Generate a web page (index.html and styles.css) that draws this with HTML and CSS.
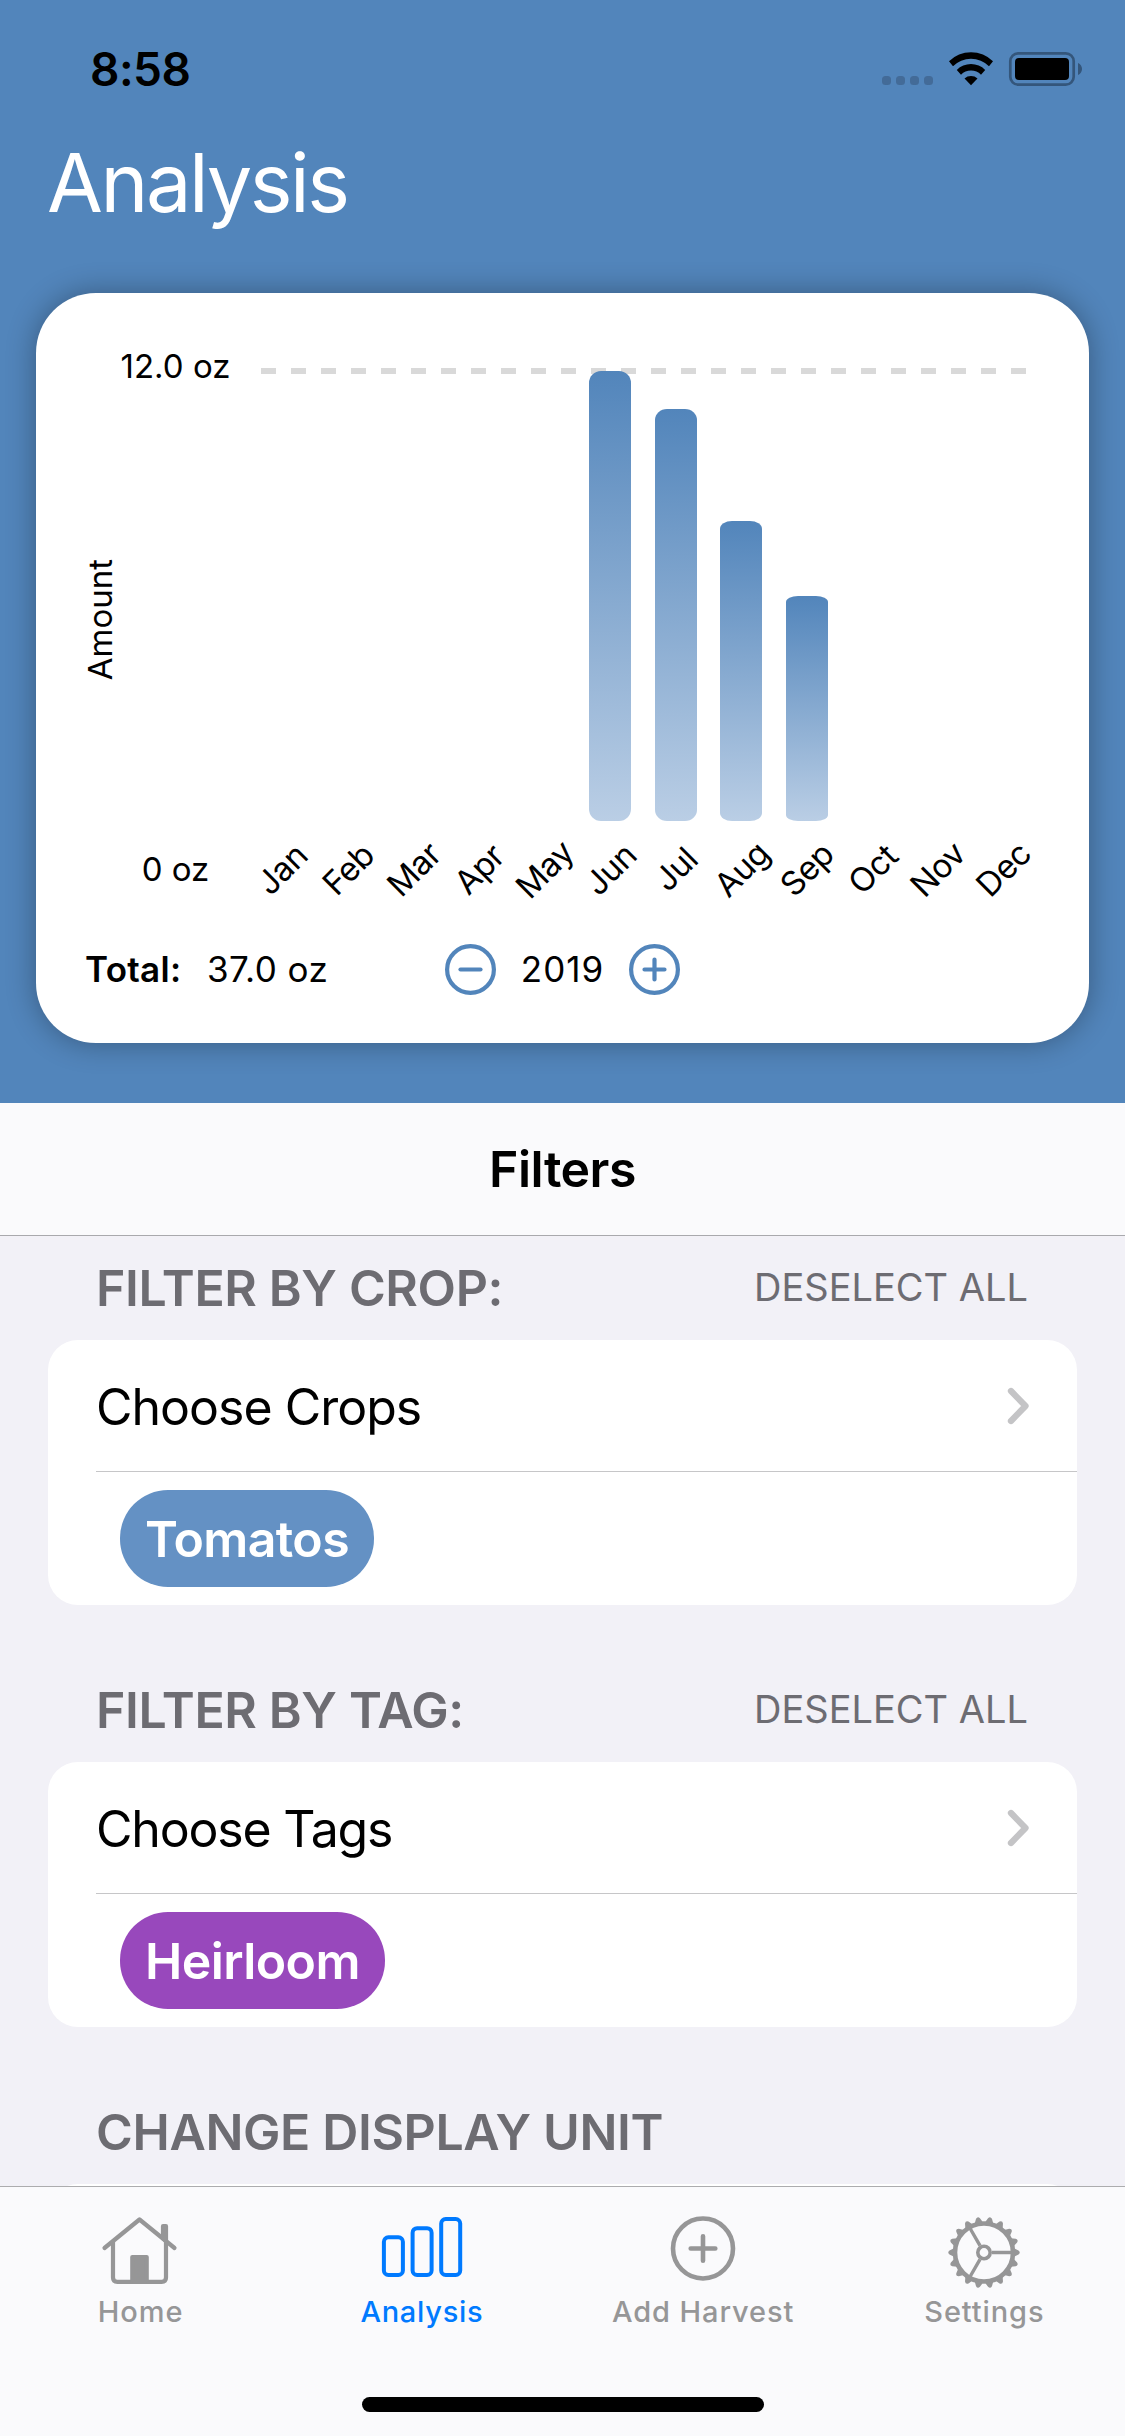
FILE: index.html
```html
<!DOCTYPE html>
<html lang="en">
<head>
<meta charset="utf-8">
<title>Analysis</title>
<link rel="stylesheet" href="styles.css">
</head>
<body>
<header class="hero">
  <div class="status">
    <span class="time">8:58</span>
    <svg class="status-icons" width="201" height="36" viewBox="0 0 201 36">
      <g fill="#436b98"><rect x="0" y="25" width="9" height="9" rx="3.5"/><rect x="14" y="25" width="9" height="9" rx="3.5"/><rect x="28" y="25" width="9" height="9" rx="3.5"/><rect x="42" y="25" width="9" height="9" rx="3.5"/></g>
      <g transform="translate(66.5 1)"><path d="M.5 9.3A31 31 0 0 1 44.5 9.3L40.5 14.3A25.5 25.5 0 0 0 4.5 14.3Z"/><path d="M8.3 18A20 20 0 0 1 36.7 18L32.5 22.7A14 14 0 0 0 12.5 22.7Z"/><path d="M16 26.4A10 10 0 0 1 29 26.4L22.5 33.2Z"/></g>
      <rect x="128.3" y="2.3" width="63.4" height="31.4" rx="8" fill="none" stroke="#34567b" stroke-width="2.7"/>
      <rect x="133" y="7" width="54" height="22" rx="4"/>
      <path d="M196 12C198.6 13 200 15.5 200 18S198.6 23 196 24Z" fill="#34567b"/>
    </svg>
  </div>
  <h1 class="title">Analysis</h1>
  <section class="card">
    <div class="chart">
      <div class="y-name"><span>Amount</span></div>
      <div class="y-axis"><span>12.0 oz</span><span>0 oz</span></div>
      <div class="plot">
        <div class="bars">
          <i></i><i></i><i></i><i></i><i></i>
          <i class="bar" style="height:450px;border-radius:12px/12px"></i>
          <i class="bar" style="height:412.5px;border-radius:12px/11px"></i>
          <i class="bar" style="height:300px;border-radius:12px/8px"></i>
          <i class="bar" style="height:225px;border-radius:12px/6px"></i>
        </div>
        <div class="months"><span>Jan</span><span>Feb</span><span>Mar</span><span>Apr</span><span>May</span><span>Jun</span><span>Jul</span><span>Aug</span><span>Sep</span><span>Oct</span><span>Nov</span><span>Dec</span></div>
      </div>
    </div>
    <div class="summary">
      <div class="total"><b>Total:</b><span>37.0 oz</span></div>
      <div class="stepper">
        <svg width="51" height="51" viewBox="0 0 51 51"><circle cx="25.5" cy="25.5" r="23.4"/><path d="M15.5 25.5H35.5"/></svg>
        <span class="year">2019</span>
        <svg width="51" height="51" viewBox="0 0 51 51"><circle cx="25.5" cy="25.5" r="23.4"/><path d="M15.5 25.5H35.5M25.5 15.5V35.5"/></svg>
      </div>
    </div>
  </section>
</header>
<div class="navbar">Filters</div>
<main class="list">
  <section class="group">
    <div class="group-head"><h2>FILTER BY CROP:</h2><span class="action">DESELECT ALL</span></div>
    <div class="cells">
      <div class="choose"><span>Choose Crops</span><svg width="23" height="38" viewBox="0 0 23 38"><path d="M4 4L18.5 19L4 34"/></svg></div>
      <div class="tags"><span class="pill crop">Tomatos</span></div>
    </div>
  </section>
  <section class="group">
    <div class="group-head"><h2>FILTER BY TAG:</h2><span class="action">DESELECT ALL</span></div>
    <div class="cells">
      <div class="choose choose-tags"><span>Choose Tags</span><svg width="23" height="38" viewBox="0 0 23 38"><path d="M4 4L18.5 19L4 34"/></svg></div>
      <div class="tags"><span class="pill tag">Heirloom</span></div>
    </div>
  </section>
  <section class="group">
    <div class="group-head"><h2>CHANGE DISPLAY UNIT</h2></div>
    <div class="cells"></div>
  </section>
</main>
<footer class="tabbar">
  <nav class="tabs">
    <a class="tab">
      <svg width="82" height="76" viewBox="0 0 82 76"><g transform="translate(2 3)" fill="none" stroke="currentColor" stroke-width="4.2" stroke-linecap="round" stroke-linejoin="round"><path d="M2.5 31L37.5 2.5L72.5 31"/><path d="M11 25V60.5Q11 64.8 15.3 64.8H59.7Q64 64.8 64 60.5V25"/><path d="M30.3 64V40H44.7V64Z" fill="currentColor"/><path d="M61 9.2H64V24L61 21.5Z" fill="currentColor"/></g></svg>
      <span>Home</span>
    </a>
    <a class="tab active">
      <svg width="82" height="76" viewBox="0 0 82 76"><g transform="translate(.9 3)" fill="none" stroke="currentColor" stroke-width="4"><rect x="2" y="20.3" width="19" height="37.7" rx="4.5"/><rect x="30.7" y="11.2" width="19" height="46.8" rx="4.5"/><rect x="59.3" y="2" width="19" height="56" rx="4.5"/></g></svg>
      <span>Analysis</span>
    </a>
    <a class="tab">
      <svg width="82" height="76" viewBox="0 0 82 76"><g fill="none" stroke="currentColor" stroke-width="4.6" stroke-linecap="round"><circle cx="41" cy="34.5" r="30"/><path d="M28.7 34.5H53.3M41 22.2V46.8"/></g></svg>
      <span>Add Harvest</span>
    </a>
    <a class="tab">
      <svg width="82" height="76" viewBox="0 0 82 76"><g transform="translate(41 38.5)" fill="none" stroke="currentColor"><circle r="29" stroke-width="4.6"/><circle r="6.2" stroke-width="3.6"/><path d="M8 0H28M-4 -6.93L-14 -24.25M-4 6.93L-14 24.25" stroke-width="3.4"/>
        <g fill="currentColor" stroke="none"><path id="teeth" d="M30-4.2L34.5-2Q37 0 34.5 2L30 4.2ZM-30-4.2L-34.5-2Q-37 0-34.5 2L-30 4.2Z"/><use href="#teeth" transform="rotate(20)"/><use href="#teeth" transform="rotate(40)"/><use href="#teeth" transform="rotate(60)"/><use href="#teeth" transform="rotate(80)"/><use href="#teeth" transform="rotate(100)"/><use href="#teeth" transform="rotate(120)"/><use href="#teeth" transform="rotate(140)"/><use href="#teeth" transform="rotate(160)"/></g></g></svg>
      <span>Settings</span>
    </a>
  </nav>
  <div class="home-indicator"></div>
</footer>
</body>
</html>
```
FILE: styles.css
```css
* { box-sizing: border-box; }
body {
  margin: 0; width: 1125px; height: 2436px; overflow: hidden;
  display: flex; flex-direction: column;
  font-family: Inter, "Liberation Sans", sans-serif; color: #000; background: #f2f1f7;
}
svg { display: block; flex: none; }
h1, h2 { margin: 0; }

.hero { height: 1103px; flex: none; background: #5285bb; }
.status { height: 138px; padding: 0 42px 0 90px; display: flex; align-items: center; justify-content: space-between; }
.time { font-size: 46px; font-weight: 600; letter-spacing: -.5px; }
.title { height: 89px; padding-left: 47px; font-size: 81px; line-height: 90px; font-weight: 400; letter-spacing: -2.4px; color: #fff; }
.card { height: 750px; margin: 66px 36px 0; padding-top: 48px; background: #fff; border-radius: 60px; box-shadow: 0 0 30px rgba(0, 0, 0, .33); }

.chart { display: grid; grid-template-columns: 31px 117px 793px; padding-left: 50px; height: 576px; font-size: 33px; }
.y-name { height: 557px; padding-right: 4px; display: flex; align-items: center; justify-content: center; }
.y-name span { writing-mode: vertical-rl; transform: rotate(180deg); }
.y-axis { height: 554px; display: flex; flex-direction: column; align-items: center; justify-content: space-between; line-height: 51px; }
.plot { margin-left: 27px; width: 766px; padding-top: 27px; }
.bars {
  height: 453px; padding-right: 1.8px; display: grid; grid-template-columns: repeat(12, 42px); justify-content: space-between; align-items: end;
  background: repeating-linear-gradient(90deg, #d9d9d9 0 15px, transparent 15px 30px) 0 0 / 100% 6px no-repeat;
}
.bar { background: linear-gradient(#5285bb, #bacee5); }
.months { height: 95px; padding-right: 2.6px; display: grid; grid-template-columns: repeat(12, 42px); justify-content: space-between; align-items: center; justify-items: center; letter-spacing: -.5px; }
.months span { transform: rotate(-45deg); }

.summary { display: grid; grid-template-columns: 1fr auto 1fr; align-items: center; height: 104px; font-size: 35px; }
.total { padding-left: 49px; display: flex; gap: 25.5px; letter-spacing: .5px; }
.total b { font-weight: 600; letter-spacing: .3px; }
.stepper { width: 235px; display: flex; align-items: center; justify-content: space-between; }
.stepper svg { fill: none; stroke: #5285bb; stroke-width: 4.2; stroke-linecap: round; }
.year { letter-spacing: 1px; }

.navbar { height: 133px; flex: none; display: flex; align-items: center; justify-content: center; background: #fafafc; border-bottom: 1px solid #a9a9ad; font-size: 50px; font-weight: 600; letter-spacing: -.5px; }

.list { height: 950px; flex: none; overflow: hidden; padding: 0 48px; }
.group { margin-bottom: 53px; }
.group-head { height: 104px; padding: 0 49px 0 48px; display: flex; align-items: center; justify-content: space-between; color: #6d6c72; }
.group-head h2 { font-size: 50px; font-weight: 600; letter-spacing: -.37px; }
.action { font-size: 38px; padding-bottom: 2px; }
.cells { height: 265px; background: #fff; border-radius: 30px; padding-left: 48px; }
.choose { height: 132px; padding-right: 47px; display: flex; align-items: center; justify-content: space-between; border-bottom: 1px solid #c6c6c8; font-size: 50px; letter-spacing: -1px; }
.choose-tags { letter-spacing: -1.2px; }
.choose span { padding-top: 2px; }
.choose svg { fill: none; stroke: #c4c4c6; stroke-width: 6.3; stroke-linecap: round; stroke-linejoin: round; }
.tags { height: 133px; display: flex; align-items: center; padding-left: 24px; }
.pill { height: 97px; display: flex; align-items: center; justify-content: center; border-radius: 48px; color: #fff; font-size: 50px; font-weight: 600; letter-spacing: -.6px; }
.crop { width: 254px; background: #6491c4; }
.tag { width: 265px; background: #9848bc; }

.tabbar { height: 250px; flex: none; border-top: 1px solid #acacae; background: #fafafc; }
.tabs { display: grid; grid-template-columns: repeat(4, 1fr); padding-top: 27px; height: 210px; }
.tab { display: flex; flex-direction: column; align-items: center; font-size: 29px; line-height: 44px; font-weight: 500; letter-spacing: .9px; color: #969697; }
.active { color: #007aff; letter-spacing: .7px; }
.home-indicator { width: 402px; height: 15px; margin: 0 auto; border-radius: 8px; background: #000; }
```
